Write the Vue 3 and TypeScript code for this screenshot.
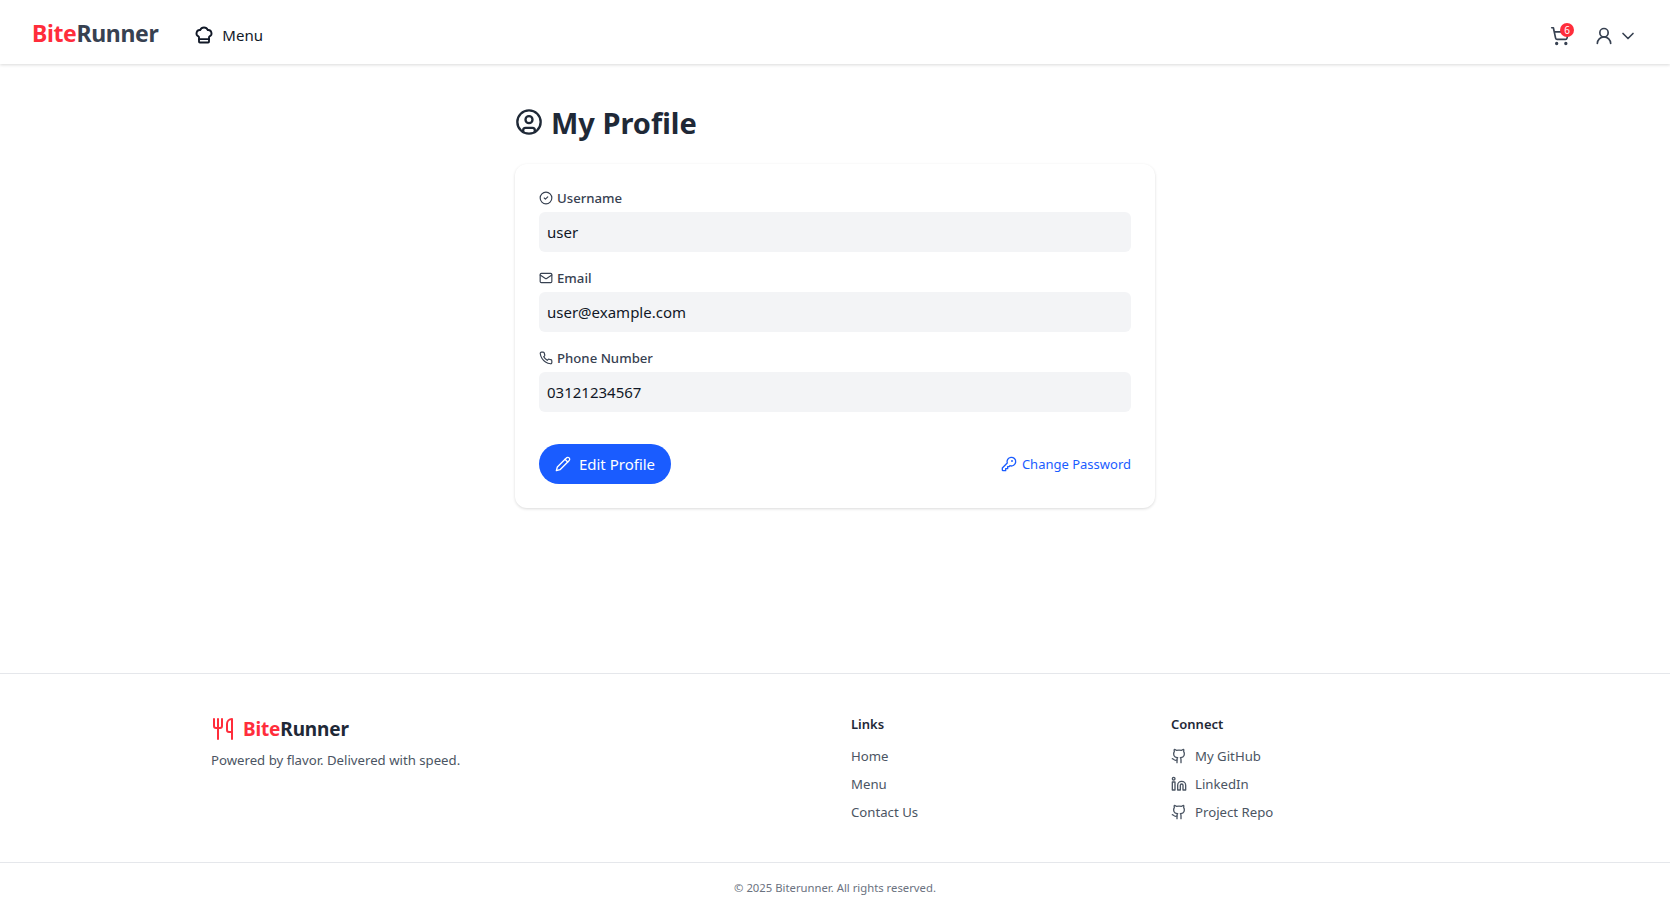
<script setup lang="ts">
const fields = [
  { label: 'Username', value: 'user', icon: 'check' },
  { label: 'Email', value: 'user@example.com', icon: 'mail' },
  { label: 'Phone Number', value: '03121234567', icon: 'phone' }
]
const links = ['Home', 'Menu', 'Contact Us']
const connect = [
  { label: 'My GitHub', icon: 'github' },
  { label: 'LinkedIn', icon: 'linkedin' },
  { label: 'Project Repo', icon: 'github' }
]
</script>

<template>
  <div class="page">
    <header class="navbar">
      <div class="nav-left">
        <div class="logo"><span class="red">Bite</span>Runner</div>
        <a class="menu-link">
          <svg class="chef" viewBox="0 0 24 24" fill="none" stroke="currentColor" stroke-width="2.2" stroke-linecap="round" stroke-linejoin="round">
            <path d="M17 21a1 1 0 0 0 1-1v-5.35c0-.457.316-.844.727-1.041a4 4 0 0 0-2.134-7.589 5 5 0 0 0-9.186 0 4 4 0 0 0-2.134 7.588c.411.198.727.585.727 1.041V20a1 1 0 0 0 1 1Z" />
            <path d="M6 17h12" />
          </svg>
          <span>Menu</span>
        </a>
      </div>
      <div class="nav-right">
        <div class="cart">
          <svg viewBox="0 0 24 24" fill="none" stroke="currentColor" stroke-width="2" stroke-linecap="round" stroke-linejoin="round">
            <circle cx="8" cy="21" r="1" />
            <circle cx="19" cy="21" r="1" />
            <path d="M2.05 2.05h2l2.66 12.42a2 2 0 0 0 2 1.58h9.78a2 2 0 0 0 1.95-1.57l1.65-7.43H5.12" />
          </svg>
          <span class="badge">6</span>
        </div>
        <div class="user">
          <svg viewBox="0 0 24 24" fill="none" stroke="currentColor" stroke-width="2" stroke-linecap="round" stroke-linejoin="round">
            <circle cx="12" cy="8" r="5" />
            <path d="M20 21a8 8 0 0 0-16 0" />
          </svg>
          <svg class="chev" viewBox="0 0 24 24" fill="none" stroke="currentColor" stroke-width="2" stroke-linecap="round" stroke-linejoin="round">
            <path d="m6 9 6 6 6-6" />
          </svg>
        </div>
      </div>
    </header>

    <main class="content">
      <h1 class="title">
        <svg viewBox="0 0 24 24" fill="none" stroke="currentColor" stroke-width="2" stroke-linecap="round" stroke-linejoin="round">
          <circle cx="12" cy="12" r="10" />
          <circle cx="12" cy="10" r="3" />
          <path d="M7 20.66V19a2 2 0 0 1 2-2h6a2 2 0 0 1 2 2v1.66" />
        </svg>
        My Profile
      </h1>
      <div class="card">
        <div v-for="f in fields" :key="f.label" class="field">
          <label class="field-label">
            <svg viewBox="0 0 24 24" fill="none" stroke="currentColor" stroke-width="2" stroke-linecap="round" stroke-linejoin="round">
              <template v-if="f.icon === 'check'">
                <circle cx="12" cy="12" r="10" />
                <path d="m9 12 2 2 4-4" />
              </template>
              <template v-else-if="f.icon === 'mail'">
                <rect x="2" y="4" width="20" height="16" rx="2" />
                <path d="m22 7-8.97 5.7a1.94 1.94 0 0 1-2.06 0L2 7" />
              </template>
              <path v-else d="M22 16.92v3a2 2 0 0 1-2.18 2 19.79 19.79 0 0 1-8.63-3.07 19.5 19.5 0 0 1-6-6 19.79 19.79 0 0 1-3.07-8.67A2 2 0 0 1 4.11 2h3a2 2 0 0 1 2 1.72c.13.96.36 1.9.7 2.81a2 2 0 0 1-.45 2.11L8.09 9.91a16 16 0 0 0 6 6l1.27-1.27a2 2 0 0 1 2.11-.45c.91.34 1.85.57 2.81.7A2 2 0 0 1 22 16.92z" />
            </svg>
            {{ f.label }}
          </label>
          <div class="field-value">{{ f.value }}</div>
        </div>
        <div class="actions">
          <button class="edit-btn">
            <svg viewBox="0 0 24 24" fill="none" stroke="currentColor" stroke-width="2" stroke-linecap="round" stroke-linejoin="round">
              <path d="M17 3a2.85 2.83 0 1 1 4 4L7.5 20.5 2 22l1.5-5.5Z" />
              <path d="m15 5 4 4" />
            </svg>
            Edit Profile
          </button>
          <a class="change-pw">
            <svg viewBox="0 0 24 24" fill="none" stroke="currentColor" stroke-width="2" stroke-linecap="round" stroke-linejoin="round">
              <path d="M2 18v3c0 .6.4 1 1 1h4v-3h3v-3h2l1.4-1.4a6.5 6.5 0 1 0-4-4Z" />
              <circle cx="16.5" cy="7.5" r=".5" fill="currentColor" />
            </svg>
            Change Password
          </a>
        </div>
      </div>
    </main>

    <footer class="footer">
      <div class="footer-grid">
        <div class="brand">
          <div class="footer-logo">
            <svg viewBox="0 0 24 24" fill="none" stroke="currentColor" stroke-width="2" stroke-linecap="round" stroke-linejoin="round">
              <path d="M3 2v7c0 1.1.9 2 2 2h4a2 2 0 0 0 2-2V2" />
              <path d="M7 2v20" />
              <path d="M21 15V2a5 5 0 0 0-5 5v6c0 1.1.9 2 2 2h3Zm0 0v7" />
            </svg>
            <span><span class="red">Bite</span>Runner</span>
          </div>
          <p class="tagline">Powered by flavor. Delivered with speed.</p>
        </div>
        <div class="col">
          <h3>Links</h3>
          <a v-for="l in links" :key="l">{{ l }}</a>
        </div>
        <div class="col">
          <h3>Connect</h3>
          <a v-for="c in connect" :key="c.label" class="social">
            <svg viewBox="0 0 24 24" fill="none" stroke="currentColor" stroke-width="2" stroke-linecap="round" stroke-linejoin="round">
              <template v-if="c.icon === 'github'">
                <path d="M15 22v-4a4.8 4.8 0 0 0-1-3.5c3 0 6-2 6-5.5.08-1.25-.27-2.48-1-3.5.28-1.15.28-2.35 0-3.5 0 0-1 0-3 1.5-2.64-.5-5.36-.5-8 0C6 2 5 2 5 2c-.3 1.15-.3 2.35 0 3.5A5.403 5.403 0 0 0 4 9c0 3.5 3 5.5 6 5.5-.39.49-.68 1.05-.85 1.65-.17.6-.22 1.23-.15 1.85v4" />
                <path d="M9 18c-4.51 2-5-2-7-2" />
              </template>
              <template v-else>
                <path d="M16 8a6 6 0 0 1 6 6v7h-4v-7a2 2 0 0 0-2-2 2 2 0 0 0-2 2v7h-4v-7a6 6 0 0 1 6-6z" />
                <rect x="2" y="9" width="4" height="12" />
                <circle cx="4" cy="4" r="2" />
              </template>
            </svg>
            {{ c.label }}
          </a>
        </div>
      </div>
      <div class="copyright">© 2025 Biterunner. All rights reserved.</div>
    </footer>
  </div>
</template>

<style>
html, body {
  margin: 0;
  background: #fff;
}
</style>

<style scoped>
.page {
  min-height: 100vh;
  display: flex;
  flex-direction: column;
  font-family: "Noto Sans", "Open Sans", sans-serif;
  color: #1f2937;
}

.navbar {
  height: 64px;
  box-sizing: border-box;
  padding: 6px 32px 0;
  display: flex;
  align-items: center;
  justify-content: space-between;
  box-shadow: 0 1px 3px rgba(0, 0, 0, 0.15);
}

.nav-left {
  display: flex;
  align-items: center;
  gap: 36px;
}

.logo {
  font-size: 23px;
  font-weight: 700;
  color: #374151;
  letter-spacing: -0.35px;
  margin-bottom: 5px;
}

.red {
  color: #ff2d3b;
}

.menu-link {
  display: flex;
  align-items: center;
  gap: 8px;
  font-size: 15px;
  color: #111827;
}

.chef {
  width: 20px;
  height: 20px;
  color: #111827;
}

.nav-right {
  display: flex;
  align-items: center;
  gap: 24px;
  margin-top: 2px;
  color: #374151;
}

.cart {
  position: relative;
  width: 20px;
  height: 20px;
}

.cart svg {
  width: 20px;
  height: 20px;
  display: block;
}

.badge {
  position: absolute;
  top: -3px;
  right: -4px;
  width: 14px;
  height: 14px;
  border-radius: 50%;
  background: #ff2d3b;
  color: #fff;
  font-size: 10px;
  line-height: 14px;
  text-align: center;
}

.user {
  display: flex;
  align-items: center;
  gap: 4px;
}

.user svg {
  width: 20px;
  height: 20px;
  display: block;
}

.content {
  flex: 1;
  width: 640px;
  margin: 0 auto;
  padding-top: 32px;
}

.title {
  margin: 0 0 14px;
  display: flex;
  align-items: center;
  gap: 8px;
  font-size: 29px;
  line-height: 54px;
  font-weight: 700;
  color: #1f2937;
}

.title svg {
  width: 28px;
  height: 28px;
  margin-bottom: 3px;
}

.card {
  box-sizing: border-box;
  height: 344px;
  padding: 24px;
  border-radius: 12px;
  box-shadow: 0 1px 3px rgba(0, 0, 0, 0.15);
}

.field {
  margin-bottom: 16px;
}

.field-label {
  display: flex;
  align-items: center;
  gap: 4px;
  font-size: 13.2px;
  line-height: 20px;
  font-weight: 500;
  color: #374151;
  margin-bottom: 4px;
}

.field-label svg {
  width: 14px;
  height: 14px;
}

.field-value {
  height: 40px;
  box-sizing: border-box;
  padding: 0 8px;
  display: flex;
  align-items: center;
  background: #f3f4f6;
  border-radius: 6px;
  font-size: 15px;
  color: #111827;
}

.actions {
  margin-top: 32px;
  display: flex;
  align-items: center;
  justify-content: space-between;
}

.edit-btn {
  height: 40px;
  width: 132px;
  border: none;
  border-radius: 20px;
  background: #1a5cff;
  color: #fff;
  font-family: inherit;
  font-size: 15px;
  display: flex;
  align-items: center;
  justify-content: center;
  gap: 8px;
}

.edit-btn svg {
  width: 16px;
  height: 16px;
}

.change-pw {
  display: flex;
  align-items: center;
  gap: 5px;
  color: #1a5cff;
  font-size: 13px;
}

.change-pw svg {
  width: 16px;
  height: 16px;
}

.footer {
  border-top: 1px solid #e5e7eb;
}

.footer-grid {
  width: 1248px;
  margin: 0 auto;
  box-sizing: border-box;
  height: 188px;
  padding-top: 40px;
  display: grid;
  grid-template-columns: 608px 288px 288px;
  column-gap: 32px;
}

.footer-logo {
  display: flex;
  align-items: center;
  gap: 8px;
  margin-top: 2px;
  font-size: 19px;
  font-weight: 700;
  color: #1f2937;
  letter-spacing: -0.15px;
}

.footer-logo svg {
  width: 24px;
  height: 24px;
  color: #ff2d3b;
}

.tagline {
  margin: 9px 0 0;
  font-size: 13.2px;
  color: #4b5563;
}

.col {
  display: flex;
  flex-direction: column;
  align-items: flex-start;
  gap: 8px;
  font-size: 13.2px;
  color: #4b5563;
}

.col h3 {
  margin: 0 0 4px;
  font-size: 13px;
  line-height: 20px;
  font-weight: 600;
  color: #1f2937;
}

.col a {
  line-height: 20px;
}

.social {
  display: flex;
  align-items: center;
  gap: 8px;
}

.social svg {
  width: 16px;
  height: 16px;
}

.copyright {
  height: 48px;
  border-top: 1px solid #e5e7eb;
  display: flex;
  align-items: center;
  justify-content: center;
  font-size: 11.3px;
  color: #6b7280;
}
</style>
